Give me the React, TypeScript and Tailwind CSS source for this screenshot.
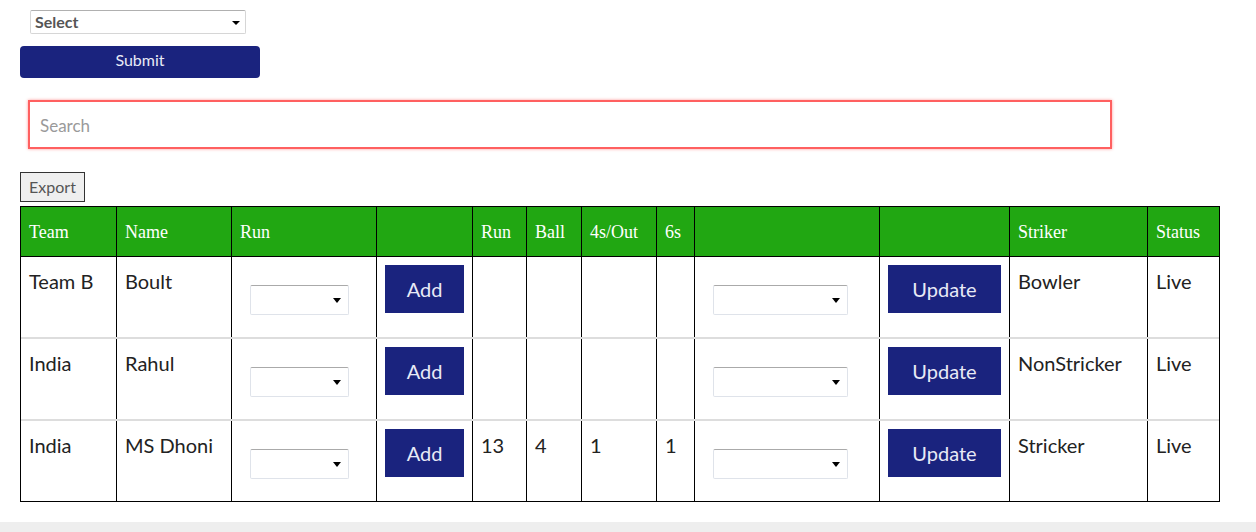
import React from "react";

const body = { fontFamily: "Lato, 'Noto Sans', sans-serif" };
const serif = { fontFamily: "'Liberation Serif', 'Times New Roman', serif" };

function FakeSelect({ w }: { w: string }) {
  return (
    <div
      className={`relative h-[30px] ${w} rounded-[2px] border border-[#dfe3ea] border-t-[#aaaaaa] bg-white`}
    >
      <div className="absolute right-[7px] top-[12px] h-0 w-0 border-l-[4px] border-r-[4px] border-t-[5px] border-l-transparent border-r-transparent border-t-black" />
    </div>
  );
}

const widths = [
  "w-[96px]",
  "w-[115px]",
  "w-[145px]",
  "w-[96px]",
  "w-[54px]",
  "w-[55px]",
  "w-[75px]",
  "w-[38px]",
  "w-[185px]",
  "w-[130px]",
  "w-[138px]",
  "w-[71px]",
];

const headers = ["Team", "Name", "Run", "", "Run", "Ball", "4s/Out", "6s", "", "", "Striker", "Status"];

const rows = [
  { team: "Team B", name: "Boult", run: "", ball: "", four: "", six: "", striker: "Bowler", status: "Live" },
  { team: "India", name: "Rahul", run: "", ball: "", four: "", six: "", striker: "NonStricker", status: "Live" },
  { team: "India", name: "MS Dhoni", run: "13", ball: "4", four: "1", six: "1", striker: "Stricker", status: "Live" },
];

function TextCell({ w, text, last }: { w: string; text: string; last?: boolean }) {
  return (
    <div className={`${w} shrink-0 ${last ? "" : "border-r border-black"} pl-[8px] pt-[12px] text-[20px] leading-[24px] text-[#222]`}>
      {text}
    </div>
  );
}

export default function App() {
  return (
    <div className="w-[1256px] h-[532px] bg-white overflow-hidden" style={body}>
      <div className="ml-[30px] mt-[10px] relative flex h-[24px] w-[216px] items-center rounded-[2px] border border-[#d6d6d6] border-t-[#b0b0b0] pl-[4px]">
        <span className="text-[16px] font-bold text-[#555]">Select</span>
        <div className="absolute right-[5px] top-[10px] h-0 w-0 border-l-[4px] border-r-[4px] border-t-[4px] border-l-transparent border-r-transparent border-t-black" />
      </div>
      <div className="ml-[20px] mt-[12px] flex h-[32px] w-[240px] items-center justify-center rounded-[4px] bg-[#1a237e] pb-[5px] text-[16px] text-[#e8eaf6]">
        Submit
      </div>
      <div className="ml-[28px] mt-[22px] flex h-[49px] w-[1084px] items-center border-2 border-[#ff6060] pl-[10px] pt-[2px] shadow-[0_0_3px_#ff9a9a]">
        <span className="text-[17px] text-[#9a9a9a]">Search</span>
      </div>
      <div className="ml-[20px] mt-[23px] flex h-[30px] w-[65px] items-center justify-center border border-[#333] bg-[#efefef] text-[16px] text-[#555]">
        Export
      </div>
      <div className="ml-[20px] mt-[4px] w-[1200px] border border-black">
        <div className="flex h-[50px] border-b border-black bg-[#21a712]">
          {headers.map((h, i) => (
            <div
              key={i}
              className={`${widths[i]} shrink-0 ${i === 11 ? "" : "border-r border-black"} flex items-center pl-[8px] pt-[2px] text-[18px] text-white`}
              style={serif}
            >
              {h}
            </div>
          ))}
        </div>
        {rows.map((r, ri) => (
          <div key={ri} className={`flex ${ri < 2 ? "h-[82px] border-b-2 border-[#dddddd]" : "h-[80px]"}`}>
            <TextCell w={widths[0]} text={r.team} />
            <TextCell w={widths[1]} text={r.name} />
            <div className={`${widths[2]} shrink-0 border-r border-black pl-[18px] pt-[28px]`}>
              <FakeSelect w="w-[99px]" />
            </div>
            <div className={`${widths[3]} shrink-0 border-r border-black pl-[8px] pt-[8px]`}>
              <div className="flex h-[48px] w-[79px] items-center justify-center bg-[#1a237e] text-[20px] text-[#e8eaf6]">
                Add
              </div>
            </div>
            <TextCell w={widths[4]} text={r.run} />
            <TextCell w={widths[5]} text={r.ball} />
            <TextCell w={widths[6]} text={r.four} />
            <TextCell w={widths[7]} text={r.six} />
            <div className={`${widths[8]} shrink-0 border-r border-black pl-[18px] pt-[28px]`}>
              <FakeSelect w="w-[135px]" />
            </div>
            <div className={`${widths[9]} shrink-0 border-r border-black pl-[8px] pt-[8px]`}>
              <div className="flex h-[48px] w-[113px] items-center justify-center bg-[#1a237e] text-[20px] text-[#e8eaf6]">
                Update
              </div>
            </div>
            <TextCell w={widths[10]} text={r.striker} />
            <TextCell w={widths[11]} text={r.status} last />
          </div>
        ))}
      </div>
      <div className="mt-[20px] h-[10px] w-full bg-[#eeeeee]" />
    </div>
  );
}
